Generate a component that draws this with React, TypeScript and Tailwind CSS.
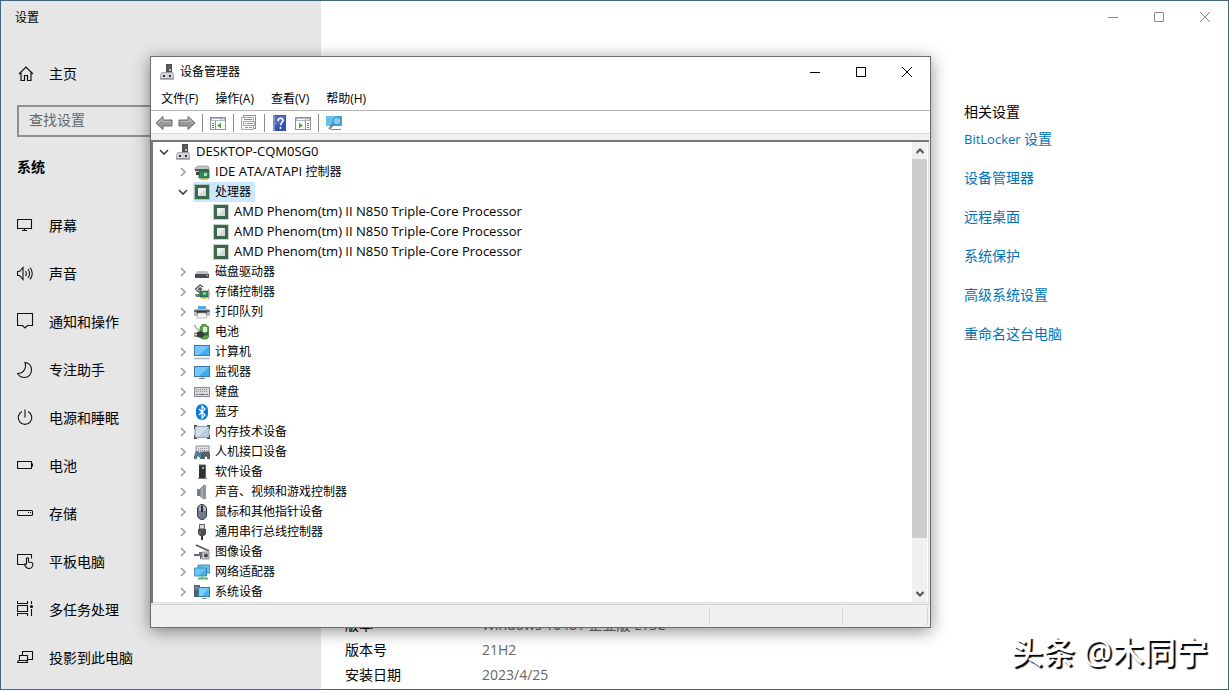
import React, { useState } from "react"

interface TreeNode{
    latin?: string;
    label?: string;
    icon: string;
    level: number;
    open?: boolean;
    leaf?: boolean;
}

const indents = ["pl-px", "pl-5", "pl-[39px]"]

const cpu = "AMD Phenom(tm) II N850 Triple-Core Processor"

const nodes: TreeNode[] = [
    { latin: "DESKTOP-CQM0SG0", icon: "pc", level: 0, open: true },
    { latin: "IDE ATA/ATAPI ", label: "控制器", icon: "ide", level: 1 },
    { label: "处理器", icon: "cpu", level: 1, open: true },
    { latin: cpu, icon: "cpu", level: 2, leaf: true },
    { latin: cpu, icon: "cpu", level: 2, leaf: true },
    { latin: cpu, icon: "cpu", level: 2, leaf: true },
    { label: "磁盘驱动器", icon: "disk", level: 1 },
    { label: "存储控制器", icon: "storage", level: 1 },
    { label: "打印队列", icon: "printer", level: 1 },
    { label: "电池", icon: "battery", level: 1 },
    { label: "计算机", icon: "computer", level: 1 },
    { label: "监视器", icon: "monitor", level: 1 },
    { label: "键盘", icon: "keyboard", level: 1 },
    { label: "蓝牙", icon: "bluetooth", level: 1 },
    { label: "内存技术设备", icon: "memory", level: 1 },
    { label: "人机接口设备", icon: "hid", level: 1 },
    { label: "软件设备", icon: "software", level: 1 },
    { label: "声音、视频和游戏控制器", icon: "sound", level: 1 },
    { label: "鼠标和其他指针设备", icon: "mouse", level: 1 },
    { label: "通用串行总线控制器", icon: "usb", level: 1 },
    { label: "图像设备", icon: "camera", level: 1 },
    { label: "网络适配器", icon: "network", level: 1 },
    { label: "系统设备", icon: "system", level: 1 },
]

const deviceIcons: Record<string, React.ReactNode> = {
    pc: <>
        <path d="M7 0h6v9H7z" fill="#4b4f50" />
        <path d="M8 2h4M8 4h4" stroke="#6f7577" />
        <rect x="10" y="5" width="2" height="2" fill="#9be08f" />
        <path d="M2.500 8.500h11l1 2v4h-13v-4z" fill="#d3d5d8" stroke="#9a9da1" strokeWidth=".8" />
        <path d="M4 11h2v2H4zM10 11h2v2h-2z" fill="#333" />
        <path d="M1 15h14" stroke="#777" />
    </>,
    ide: <>
        <path d="M1 4l3-2h10l1 2v3H1z" fill="#c3c6c7" stroke="#8d9294" strokeWidth=".7" />
        <path d="M1 5h14v2H1z" fill="#55595b" />
        <path d="M5 7h10v7H5z" fill="#2c8a55" stroke="#17633a" strokeWidth=".8" />
        <path d="M10 9h3v3h-3z" fill="#b9d9c4" />
        <path d="M2 8h3v3H2z" fill="#3b3f40" />
        <path d="M7 15h7" stroke="#d5a82c" strokeWidth="2" strokeDasharray="1.500 .6" />
    </>,
    cpu: <>
        <rect x=".5" y=".5" width="15" height="15" fill="none" stroke="#8fa596" strokeDasharray="1 1" />
        <rect x="1" y="1" width="14" height="14" fill="#3b674c" />
        <rect x="4" y="4" width="8" height="8" fill="#d5dad7" />
        <path d="M4 12V4h8z" fill="#eef0ef" />
    </>,
    disk: <>
        <path d="M3 7h10l2 3H1z" fill="#bfc1c3" />
        <rect x="1" y="10" width="14" height="4" fill="#484b4e" />
        <rect x="12" y="11" width="2" height="1" fill="#72ef63" />
    </>,
    storage: <>
        <path d="M9 3L6 1 1.500 5 6 9l1.500-1M4 5h4M6 3v4" fill="none" stroke="#4a4d4e" strokeWidth="1.300" />
        <path d="M1 10h5v3H2z" fill="#757b7d" />
        <path d="M6 7h9v6H6z" fill="#318556" stroke="#1d5f3a" strokeWidth=".7" />
        <path d="M14.500 5v10" stroke="#9ba4a0" />
        <path d="M9 8.500h3v2H9z" fill="#b1d5c0" />
        <path d="M8 14h5" stroke="#d3a832" strokeWidth="2" strokeDasharray="1.500 .6" />
    </>,
    printer: <>
        <path d="M4 2h8v4H4z" fill="#52aeda" />
        <path d="M1 5h14l1 2v5H0V7z" fill="#b4b9bc" />
        <path d="M0 6h16v2H0z" fill="#686e71" />
        <path d="M3 7h10v3H3z" fill="#35393b" />
        <path d="M4 9h8l1 5H3z" fill="#f4f5f6" stroke="#a2a6a8" strokeWidth=".7" />
    </>,
    battery: <>
        <path d="M7 2h1V.5h4V2h2l.5 1v10l-1.500 2H8l-2-2V4z" fill="#58aa45" stroke="#397532" strokeWidth=".8" />
        <path d="M9 3h4v5H9z" fill="#dff2d8" />
        <path d="M1 1c0 4 3 3 4 6" fill="none" stroke="#62676a" />
        <path d="M3 8l4-1 3 2v3l-3 2-4-1z" fill="#373c3e" />
        <path d="M0 9.500h3M0 12h3" stroke="#83724a" strokeWidth="1.300" />
        <path d="M10 10.500h3V8" fill="none" stroke="#2d4530" strokeWidth="1.300" />
    </>,
    computer: <>
        <rect x=".5" y="1.500" width="15" height="10" fill="#46aef0" stroke="#377da6" />
        <path d="M1 2h14L5 11H1z" fill="#75c6fa" />
        <path d="M0 14.500h16" stroke="#a7b7c1" strokeWidth="1.500" />
    </>,
    monitor: <>
        <rect x=".5" y="2.500" width="15" height="10" fill="#42aaf0" stroke="#377da6" />
        <path d="M1 3h14L5 12H1z" fill="#75c6fa" />
        <path d="M5 14.500h6M8 13v1" stroke="#78848d" />
    </>,
    keyboard: <>
        <rect x=".5" y="3.500" width="15" height="9" fill="#d9dadd" stroke="#898d92" />
        <path d="M2 5.500h12M2 7.500h12" stroke="#888c91" strokeDasharray="1 1" />
        <path d="M2 10.500h2M5 10.500h6M12 10.500h2" stroke="#666b70" />
    </>,
    bluetooth: <>
        <rect x="2" y="0" width="12" height="16" rx="6" fill="#087bd9" />
        <path d="M5 5l6 6-3 3V2l3 3-6 6" fill="none" stroke="#fff" strokeWidth="1.200" />
    </>,
    memory: <>
        <path d="M0 5V2h3M13 2h3v3M16 11v3h-3M3 14H0v-3" fill="none" stroke="#41484d" strokeWidth="2" />
        <rect x="1" y="2.500" width="14" height="11" rx="1" fill="#b9cfdf" stroke="#7e8e98" strokeWidth=".8" />
        <path d="M2 3h12L4 13H2z" fill="#cfdfeb" />
    </>,
    hid: <>
        <path d="M2 2h13v6H2z" fill="#e2e4e7" stroke="#8a8e92" />
        <path d="M4 4.500h10M4 6.500h10" stroke="#858b90" strokeDasharray="1 1" />
        <path d="M0 14l2-6h2l1 2 2-2 1 6-1 1-2-3H3l-1 3z" fill="#4c8db7" stroke="#315267" strokeWidth=".8" />
        <path d="M8 14V9l2-1h1l1 2 1-2h2l1 6-2 1-1-3h-2l-1 3z" fill="#60686e" stroke="#36393c" strokeWidth=".8" />
    </>,
    software: <>
        <path d="M5 1h7v13H5z" fill="#303335" />
        <path d="M5 1h6.500v13" fill="none" stroke="#62676a" />
        <rect x="8" y="3" width="2" height="2" fill="#72db68" />
        <path d="M4 14.500h9" stroke="#7b7d7e" />
    </>,
    sound: <>
        <path d="M3 5h3v7H3z" fill="#797f84" />
        <path d="M6 5l4-4v14l-4-3z" fill="#a5aaaf" stroke="#6f757a" strokeWidth=".8" />
        <path d="M10 1h2v14h-2z" fill="#8e9398" />
    </>,
    mouse: <>
        <rect x="3.500" y=".5" width="9" height="15" rx="4.500" fill="#747b89" stroke="#343941" />
        <path d="M5 5c0-3 1-4 2-4v6H5zM9 1c2 1 3 2 3 4v2H9z" fill="#aeb5c4" />
        <path d="M8 2v6" stroke="#272d35" strokeWidth="2" />
    </>,
    usb: <>
        <path d="M5.500.5h5V5h-5z" fill="#d9dbdc" stroke="#5b5f61" />
        <path d="M4 5h8v5l-2 2H6l-2-2z" fill="#494d4f" />
        <path d="M8 12v4" stroke="#333" strokeWidth="2" />
        <path d="M6 7v3" stroke="#808587" />
    </>,
    camera: <>
        <path d="M2 1l13 6" stroke="#505558" strokeWidth="1.500" />
        <path d="M0 10h5V8h3v5H6v-1H0z" fill="#676b6d" />
        <path d="M8 8h7v7H8z" fill="#c9ccd0" stroke="#7b8086" strokeWidth=".8" />
        <circle cx="12" cy="11.500" r="2" fill="#45494c" />
        <path d="M6.500 13v2" stroke="#45494c" />
    </>,
    network: <>
        <path d="M4 1h12v8H4z" fill="#62c3ec" stroke="#317aa5" strokeWidth=".8" />
        <path d="M.5 4h12v8H.5z" fill="#48afe8" stroke="#3279a3" strokeWidth=".8" />
        <path d="M1 4.500h11L5 11.500H1z" fill="#6bc5f3" />
        <path d="M8 12.500v2M4 14.500h10" stroke="#59b675" strokeWidth="2" />
    </>,
    system: <>
        <path d="M0 1h6v12H0z" fill="#51606a" />
        <path d="M1 3h4M1 5h4" stroke="#99a6ad" />
        <rect x="4.500" y="3.500" width="11" height="9" fill="#48b1eb" stroke="#3979a0" />
        <path d="M5 4h10l-7 8H5z" fill="#7dcdf7" />
        <path d="M8 14.500h5" stroke="#8a9ba5" />
    </>,
}

const DeviceIcon = ({ name }: { name: string }) => (
    <svg className="size-4 shrink-0" viewBox="0 0 16 16">{deviceIcons[name]}</svg>
)

const navItems = [
    { label: "屏幕", icon: <path d="M.5 2.500h14v9H.5zM7.500 11.500v2M5 13.500h5" /> },
    { label: "声音", icon: <path d="M.5 6.500h2l3.500-4v12l-3.500-4h-2zM8.500 6c1 1.500 1 3.500 0 5M11 4c2 2.500 2 6.500 0 9M13 2.500c3 3.500 3 8.500 0 12" /> },
    { label: "通知和操作", icon: <path d="M.5 .5h15v12h-5L8 15l-2.500-2.500h-5z" /> },
    { label: "专注助手", icon: <path d="M8 1.500c4 .5 6.500 3.500 6.500 7.500 0 4.500-3 7.500-7 7.500-3 0-5.500-1.500-7-4C6 12.500 10 8 8 1.500z" /> },
    { label: "电源和睡眠", icon: <path d="M5 2.500a6.800 6.800 0 1 0 6 0M8 .5v8" /> },
    { label: "电池", icon: <path d="M.5 4.500h14v7H.5zM15.500 6.500v3" /> },
    { label: "存储", icon: <><rect x=".5" y="5.500" width="15" height="5" rx="1" /><path d="M11 7.500h1M13 7.500h1" /></> },
    { label: "平板电脑", icon: <path d="M7 11.500H.5v-10h14v4M9.500 11V5.500c0-1 2-1 2 0v3.500l3 .5c1 .2 1.500 1 1.300 2-.3 2.500-1 4-3.800 4-2 0-3.500-1.500-4.500-4 .5-1 1.300-.7 2 .5" /> },
    { label: "多任务处理", icon: <><path d="M.5 0v2.500h10V0M.5 4.500h10v6H.5zM.5 15v-2.500h10V15M14.500 0v3M14.500 8v7" /><circle cx="14.500" cy="5.500" r="1" fill="#111" /></> },
    { label: "投影到此电脑", icon: <path d="M5.500 6V2.500h10v8H11M2.500 6.500h8v5h-8zM.5 13.500h10l-1-2h-8z" /> },
]

const links: { latin?: string; label: string }[] = [
    { latin: "BitLocker ", label: "设置" },
    { label: "设备管理器" },
    { label: "远程桌面" },
    { label: "系统保护" },
    { label: "高级系统设置" },
    { label: "重命名这台电脑" },
]

const details = [
    { name: "版本", value: "Windows 10 IoT 企业版 LTSC" },
    { name: "版本号", value: "21H2" },
    { name: "安装日期", value: "2023/4/25" },
]

const menus = ["文件(F)", "操作(A)", "查看(V)", "帮助(H)"]

const captionPaths = [
    { label: "最小化", d: "M0 5.500h10" },
    { label: "最大化", d: "M.5 .5h9v9h-9z" },
    { label: "关闭", d: "M0 0l10 10M10 0L0 10" },
]

const CaptionButtons = () => (
    <div className="flex">
        {captionPaths.map((item) => (
            <button key={item.label} aria-label={item.label} className="flex h-full w-[46px] items-center justify-center">
                <svg className="size-[10px] overflow-visible" viewBox="0 0 10 10" fill="none" stroke="currentColor">
                    <path d={item.d} />
                </svg>
            </button>
        ))}
    </div>
)

const Arrow = ({ back }: { back?: boolean }) => (
    <svg className="size-4 overflow-visible" viewBox="0 0 16 16">
        <path d={back ? "M0 8l7-6.500V5h9v6H7v3.500z" : "M16 8L9 1.500V5H0v6h9v3.500z"} fill="#999" stroke="#6b6b6b" />
        <path d={back ? "M2 8l4-4v2.500h9" : "M14 8l-4-4v2.500H1"} fill="none" stroke="#bcbcbc" />
    </svg>
)

const Panel = ({ right }: { right?: boolean }) => (
    <svg className="size-4" viewBox="0 0 16 16">
        <rect x=".5" y="2.500" width="15" height="12" fill="#fff" stroke="#8b949c" />
        <path d="M1 3h14v3H1z" fill="#aeb7c0" />
        <path d="M2 4.500h8M11 4.500h1M13 4.500h1" stroke="#fff" />
        <path d={right ? "M10.500 6v8" : "M5.500 6v8"} stroke="#8b949c" />
        <path d={right ? "M12 8.500h2M12 10.500h2M12 12.500h2" : "M2 8.500h2M2 10.500h2M2 12.500h2"} stroke="#637c9b" />
        <path d={right ? "M4 7.500l4 3-4 3z" : "M11 7.500l-4 3 4 3z"} fill="#54a845" />
    </svg>
)

const Separator = () => <span className="h-[18px] w-px bg-[#8c8c8c]" />

const Toolbar = () => (
    <div className="flex h-[23px] items-center gap-[7px] border-b border-[#dadada] pt-0.5 pl-[5px]">
        <button aria-label="后退"><Arrow back /></button>
        <button aria-label="前进"><Arrow /></button>
        <Separator />
        <button aria-label="显示/隐藏控制台树"><Panel /></button>
        <Separator />
        <button aria-label="属性">
            <svg className="size-4" viewBox="0 0 16 16">
                <rect x="2.500" y=".5" width="12" height="13" fill="#fff" stroke="#8c949c" />
                <path d="M.5 2.500h12v12H.5z" fill="#f4f5f6" stroke="#a3a9af" />
                <path d="M3 4.500h8" stroke="#7690ad" />
                <path d="M2.500 6.500h11v4h-11z" fill="#fff" stroke="#a3a9af" />
                <path d="M4 8.500h1M6 8.500h6" stroke="#8d959d" />
                <path d="M4 12.500h3M8 12.500h3" stroke="#5fa8ca" />
            </svg>
        </button>
        <Separator />
        <button aria-label="帮助">
            <svg className="size-4" viewBox="0 0 16 16">
                <rect x="1" y="0" width="13" height="16" fill="#3453ae" />
                <path d="M2 0v16" stroke="#8192cf" strokeWidth="2" />
                <path d="M3 1h10v5L3 11z" fill="#5472c5" />
                <path d="M6 6c0-3.500 5-3.500 5-.5C11 8 8.500 7.500 8.500 10.500M8.500 12v2" fill="none" stroke="#fff" strokeWidth="1.600" />
            </svg>
        </button>
        <button aria-label="显示/隐藏操作窗格"><Panel right /></button>
        <Separator />
        <button aria-label="扫描检测硬件改动">
            <svg className="size-4 overflow-visible" viewBox="0 0 16 16">
                <rect x="0" y="1" width="16" height="10" fill="#41a8e4" />
                <path d="M0 1h12L3 11H0z" fill="#65bfef" />
                <path d="M5 14.500h10" stroke="#7b868d" />
                <circle cx="11" cy="6" r="4" fill="#83cdf2" stroke="#4587ad" />
                <path d="M8 9l-5 5" stroke="#708592" strokeWidth="2" />
            </svg>
        </button>
    </div>
)

const DeviceTree = () => {

    const [selected,setSelected] = useState(2);
    const [rootOpen,setRootOpen] = useState(true);
    const [cpuOpen,setCpuOpen] = useState(true);

    const isOpen = (node: TreeNode) => node.open && (node.level === 0 ? rootOpen : cpuOpen)

    const handleToggle = (node: TreeNode) =>{
        if (!node.open) return
        if (node.level === 0) setRootOpen(!rootOpen)
        else setCpuOpen(!cpuOpen)
    }

    return (
        <ul className="min-w-0 flex-1">
            {nodes.map((node,index)=>{
                if (node.level > 0 && !rootOpen) return null
                if (node.level > 1 && !cpuOpen) return null
                return (
                    <li key={index} className={`flex h-5 items-center ${indents[node.level]}`}>
                        {node.leaf ? <span className="w-5" /> : (
                            <button aria-label="展开" className="flex w-5 justify-center" onClick={()=>handleToggle(node)}>
                                <svg className="size-[10px]" viewBox="0 0 10 10" fill="none" strokeWidth="1.600">
                                    {isOpen(node)
                                        ? <path d="M1 3l4 4 4-4" stroke="#404040" />
                                        : <path d="M3 1l4 4-4 4" stroke="#a0a0a0" />}
                                </svg>
                            </button>
                        )}
                        <button
                        className={`flex h-5 items-center gap-[5px] pr-1 pl-px ${selected === index ? "bg-[#cce8ff]" : ""}`}
                        onClick={()=>setSelected(index)}>
                            <DeviceIcon name={node.icon} />
                            <span className="whitespace-pre">
                                {node.latin && <span className="text-[13px]">{node.latin}</span>}
                                {node.label}
                            </span>
                        </button>
                    </li>
                )
            })}
        </ul>
    )
}

const ScrollBar = () => (
    <div className="flex w-4 flex-col border-r border-white bg-[#f0f0f0]">
        <button aria-label="向上滚动" className="flex h-[17px] items-center justify-center">
            <svg className="size-2" viewBox="0 0 8 8" fill="none" stroke="#555" strokeWidth="2"><path d="M.5 6L4 2.500 7.500 6" /></svg>
        </button>
        <div className="flex-1">
            <div className="h-[89%] bg-[#cdcdcd]" />
        </div>
        <button aria-label="向下滚动" className="flex h-[17px] items-center justify-center">
            <svg className="size-2" viewBox="0 0 8 8" fill="none" stroke="#555" strokeWidth="2"><path d="M.5 2L4 5.500 7.500 2" /></svg>
        </button>
    </div>
)

const DeviceManager = () => (
    <section className="absolute top-[55px] left-[149px] w-[781px] border border-[#6b6b6b] bg-[#f0f0f0] text-xs text-black shadow-[0_3px_16px_rgba(0,0,0,0.45)]">
        <header className="flex h-[30px] justify-between bg-white">
            <h2 className="flex items-center gap-[5px] pl-2">
                <DeviceIcon name="pc" />
                设备管理器
            </h2>
            <CaptionButtons />
        </header>
        <nav className="flex h-6 gap-[17px] border-b border-[#b4b4b4] bg-white px-[10px]">
            {menus.map((menu) => (
                <button key={menu}>{menu}</button>
            ))}
        </nav>
        <div className="bg-white"><Toolbar /></div>

        {/* tree panel */}
        <div className="mt-1.5 mr-px border-t-2 border-l-2 border-[#777]">
            <div className="flex border-r border-b border-[#dedede] bg-white">
                <DeviceTree />
                <ScrollBar />
            </div>
        </div>

        {/* status bar */}
        <footer className="mt-px flex h-[23px] border-t border-[#d2d2d2] py-0.5 pr-0.5">
            <span className="flex-1 border-r border-[#d6d6d6]" />
            <span className="w-[133px] border-r border-[#d6d6d6]" />
            <span className="w-[85px] border-r border-[#d6d6d6]" />
        </footer>
    </section>
)

const SideBar = () => {

    const [query,setQuery] = useState("");

    return (
        <aside className="w-80 shrink-0 bg-[#e6e6e6]">
            <h1 className="flex h-[34px] items-center pl-3.5 text-xs">设置</h1>
            <a href="#home" className="mt-[18px] flex h-[42px] items-center gap-3.5 pl-4">
                <svg className="size-[18px]" viewBox="0 0 18 18" fill="none" stroke="#111" strokeWidth="1.200">
                    <path d="M2 9l7-7 7 7M4 7.500v8h3.500v-5h3v5H14v-8" />
                </svg>
                主页
            </a>
            <input type="text" aria-label="查找设置" placeholder="查找设置"
            className="mt-[10px] ml-4 block h-8 w-72 border-2 border-[#8f8f8f] pb-1 pl-[10px] placeholder:text-[#666]"
            value={query} onChange={e =>setQuery(e.target.value)} />
            <h2 className="mt-3 flex h-9 items-center pl-4 font-bold">系统</h2>
            <nav className="mt-[17px]">
                {navItems.map((item) => (
                    <a key={item.label} href="#system" className="flex h-12 items-center gap-3.5 pl-4">
                        <svg className="size-[18px]" viewBox="0 0 18 18" fill="none" stroke="#111" strokeWidth="1.100">{item.icon}</svg>
                        {item.label}
                    </a>
                ))}
            </nav>
        </aside>
    )
}

const App = () => {
  return (
    <div className="relative flex h-screen overflow-hidden border border-[#41677f] bg-white font-['Open_Sans','Noto_Sans_CJK_SC',sans-serif] text-sm text-black">
        <SideBar />
        <main className="flex min-w-0 flex-1 flex-col">
            <header className="flex h-8 justify-end text-[#8a8a8a]">
                <CaptionButtons />
            </header>
            <div className="flex flex-1 justify-between">
                <dl className="flex flex-col justify-end pb-0.5 pl-6">
                    {details.map((item) => (
                        <div key={item.name} className="flex h-[25px] items-center">
                            <dt className="w-[137px]">{item.name}</dt>
                            <dd className="text-[#666]">{item.value}</dd>
                        </div>
                    ))}
                </dl>
                <section className="w-[264px] pt-[69px]">
                    <h2>相关设置</h2>
                    <ul className="mt-[7px] flex flex-col gap-[19px]">
                        {links.map((link) => (
                            <li key={link.label} className="h-5">
                                <a href="#related" className="text-[#0074b7]">
                                    {link.latin && <span className="text-[13px]">{link.latin}</span>}
                                    {link.label}
                                </a>
                            </li>
                        ))}
                    </ul>
                </section>
            </div>
        </main>
        <DeviceManager />
        <p className="absolute right-5 bottom-3.5 text-[32px] font-medium text-white [text-shadow:2px_2px_1px_#000]">头条 @木同宁</p>
    </div>
  )
}

export default App
